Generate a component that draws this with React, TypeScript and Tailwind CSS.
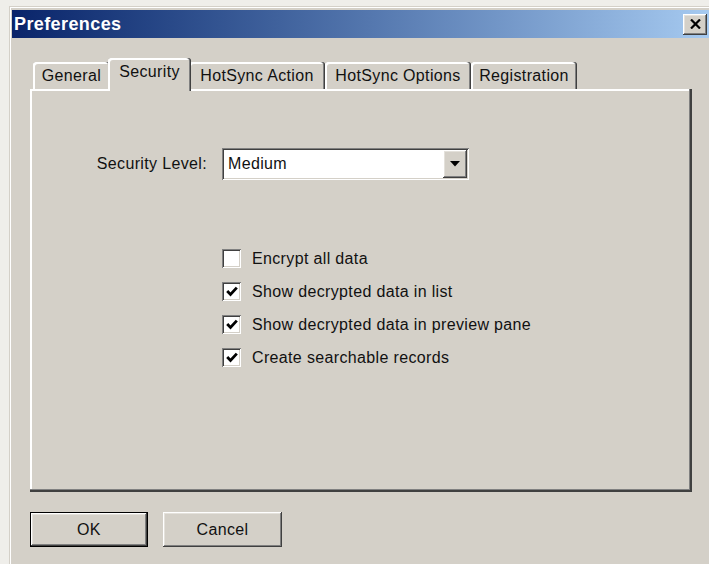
import React from 'react';

const raised =
    'shadow-[inset_-1px_-1px_#404040,inset_1px_1px_#ffffff,inset_-2px_-2px_#808080,inset_2px_2px_#e4e1db]';
const sunken =
    'shadow-[inset_1px_1px_#808080,inset_-1px_-1px_#ffffff,inset_2px_2px_#404040,inset_-2px_-2px_#d4d0c8]';

type Tab = { label: string; width: string; active?: boolean };

const tabs: Tab[] = [
    { label: 'General', width: 'w-[77px]' },
    { label: 'Security', width: 'w-[83px]', active: true },
    { label: 'HotSync Action', width: 'w-[136px]' },
    { label: 'HotSync Options', width: 'w-[146px]' },
    { label: 'Registration', width: 'w-[106px]' },
];

const options = [
    { label: 'Encrypt all data', checked: false },
    { label: 'Show decrypted data in list', checked: true },
    { label: 'Show decrypted data in preview pane', checked: true },
    { label: 'Create searchable records', checked: true },
];

function TabButton({ tab }: { tab: Tab }) {
    const base =
        'relative flex justify-center rounded-t-[3px] bg-[#d4d0c8] shadow-[inset_-1px_0_#404040,inset_-2px_0_#808080,inset_2px_2px_#ffffff]';
    if (tab.active) {
        return (
            <div className={`${base} ${tab.width} z-10 -mx-[2px] -mb-[2px] h-[33px] pt-[5px]`}>
                {tab.label}
            </div>
        );
    }
    return <div className={`${base} ${tab.width} h-[27px] pt-[5px]`}>{tab.label}</div>;
}

function CheckBox({ checked }: { checked: boolean }) {
    return (
        <div className={`flex h-[19px] w-[19px] items-center justify-center bg-white ${sunken}`}>
            {checked ? (
                <svg width="12" height="11" viewBox="0 0 12 11">
                    <path d="M1.2 5 L4.5 8.4 L10.8 1.6" fill="none" stroke="#000" strokeWidth="2.8" />
                </svg>
            ) : null}
        </div>
    );
}

function PushButton({ label, isDefault }: { label: string; isDefault?: boolean }) {
    if (isDefault) {
        return (
            <div className="h-[35px] w-[118px] border border-black">
                <div className={`flex h-full w-full items-center justify-center bg-[#d4d0c8] ${raised}`}>
                    {label}
                </div>
            </div>
        );
    }
    return (
        <div className={`flex h-[35px] w-[119px] items-center justify-center bg-[#d4d0c8] ${raised}`}>
            {label}
        </div>
    );
}

function App() {
    return (
        <div className="h-[564px] w-[709px] overflow-hidden bg-[#efeeea] pl-[9px] pt-[6px] font-['Liberation_Sans',Arial,sans-serif] text-[16px] leading-[18px] tracking-[0.35px] text-[#111]">
            <div className="h-full border-l border-t border-[#d4d0c8]">
                <div className="h-full border-l border-t border-white bg-[#d4d0c8] pl-[1px] pt-[2px]">
                    {/* title bar */}
                    <div className="flex h-[28px] items-center justify-between bg-gradient-to-r from-[#0a246a] to-[#a6caf0] pl-[2px] pr-[2px]">
                        <span className="text-[18px] font-bold tracking-[0.4px] text-white">Preferences</span>
                        <div className={`flex h-[21px] w-[24px] items-center justify-center bg-[#d4d0c8] ${raised}`}>
                            <svg width="11" height="10" viewBox="0 0 11 10">
                                <path d="M1 0.5 L10 9.5 M10 0.5 L1 9.5" stroke="#000" strokeWidth="2.2" />
                            </svg>
                        </div>
                    </div>

                    {/* tab strip */}
                    <div className="relative z-10 ml-[21px] mt-[20px] flex h-[31px] items-end">
                        {tabs.map((tab) => (
                            <TabButton key={tab.label} tab={tab} />
                        ))}
                    </div>

                    {/* tab page */}
                    <div className="ml-[18px] h-[403px] w-[662px] shadow-[inset_-2px_-2px_#404040,inset_-3px_-3px_#808080,inset_2px_2px_#ffffff]">
                        <div className="flex items-center pt-[59px]">
                            <label className="w-[177px] text-right">Security Level:</label>
                            <div className={`ml-[15px] flex h-[32px] w-[247px] items-center justify-between bg-white pl-[6px] pr-[2px] ${sunken}`}>
                                <span>Medium</span>
                                <div className={`flex h-[28px] w-[24px] items-center justify-center bg-[#d4d0c8] ${raised}`}>
                                    <svg width="10" height="6" viewBox="0 0 10 6">
                                        <path d="M0 0 H10 L5 5.5 Z" fill="#000" />
                                    </svg>
                                </div>
                            </div>
                        </div>

                        <div className="ml-[192px] mt-[62px] flex flex-col">
                            {options.map((opt) => (
                                <div key={opt.label} className="flex h-[33px] items-center gap-[11px]">
                                    <CheckBox checked={opt.checked} />
                                    <span>{opt.label}</span>
                                </div>
                            ))}
                        </div>
                    </div>

                    {/* dialog buttons */}
                    <div className="ml-[18px] mt-[20px] flex gap-[15px]">
                        <PushButton label="OK" isDefault />
                        <PushButton label="Cancel" />
                    </div>
                </div>
            </div>
        </div>
    );
}

export default App;
